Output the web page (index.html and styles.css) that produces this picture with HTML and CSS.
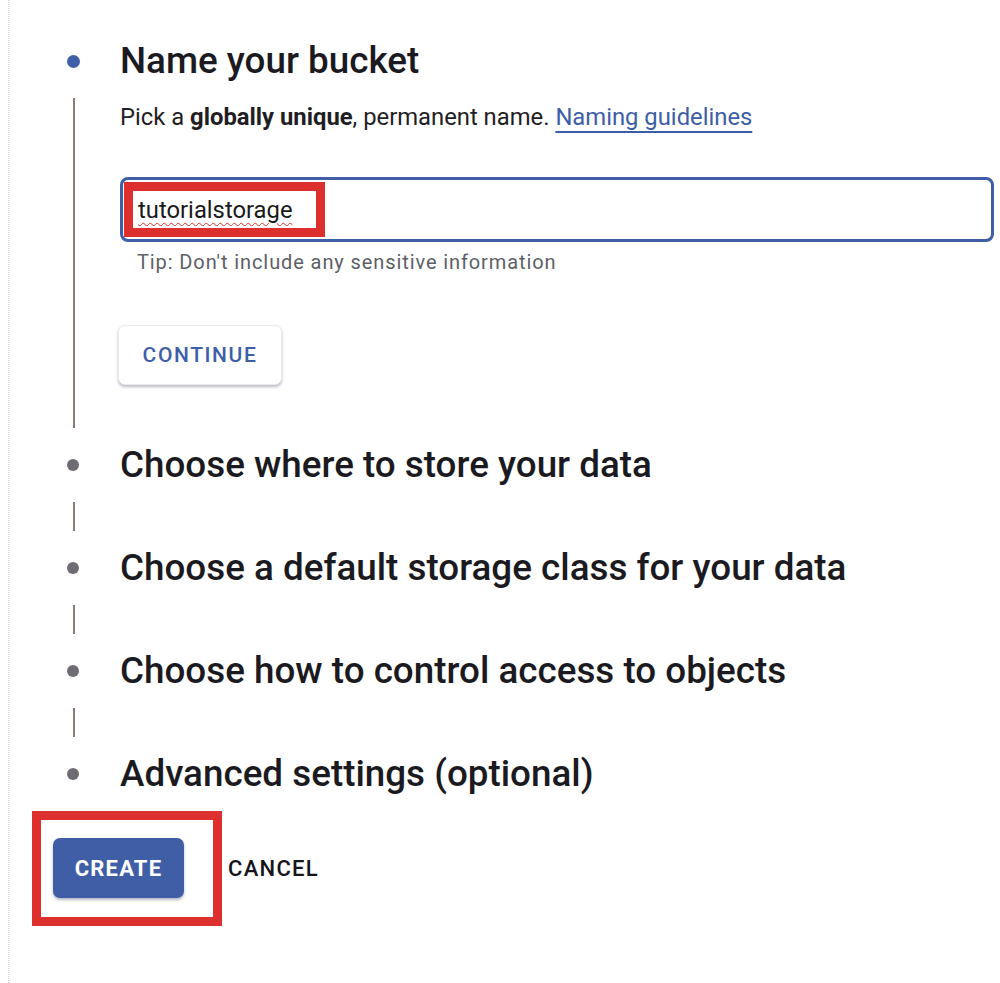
FILE: index.html
```html
<!DOCTYPE html>
<html lang="en">
<head>
<meta charset="utf-8">
<title>Create a bucket</title>
<link rel="stylesheet" href="styles.css">
</head>
<body>
<div class="page">
  <div class="stepper">
    <section class="step">
      <div class="step-head">
        <span class="dot dot-active"></span>
        <h2 class="step-title">Name your bucket</h2>
      </div>
      <div class="step-body">
        <p class="hint">Pick a <b>globally unique</b>, permanent name. <a class="link" href="#">Naming guidelines</a></p>
        <div class="field">
          <span class="mark"><span class="typo">tutorialstorage</span></span>
        </div>
        <p class="tip">Tip: Don't include any sensitive information</p>
        <button class="btn-continue" type="button">CONTINUE</button>
      </div>
    </section>

    <section class="step">
      <div class="step-head">
        <span class="dot"></span>
        <h2 class="step-title">Choose where to store your data</h2>
      </div>
    </section>
    <div class="connector"></div>
    <section class="step">
      <div class="step-head">
        <span class="dot"></span>
        <h2 class="step-title">Choose a default storage class for your data</h2>
      </div>
    </section>
    <div class="connector"></div>
    <section class="step">
      <div class="step-head">
        <span class="dot"></span>
        <h2 class="step-title">Choose how to control access to objects</h2>
      </div>
    </section>
    <div class="connector"></div>
    <section class="step">
      <div class="step-head">
        <span class="dot"></span>
        <h2 class="step-title">Advanced settings (optional)</h2>
      </div>
    </section>
  </div>

  <div class="actions">
    <div class="highlight">
      <button class="btn-create" type="button">CREATE</button>
    </div>
    <button class="btn-cancel" type="button">CANCEL</button>
  </div>
</div>
</body>
</html>
```

FILE: styles.css
```css
* { box-sizing: border-box; }

html, body {
  margin: 0;
  padding: 0;
  background: #ffffff;
}

body {
  font-family: Roboto, "Liberation Sans", Arial, sans-serif;
  color: #1d1c22;
}

.page {
  margin-left: 8px;
  border-left: 1px dotted #ddd3cb;
  min-height: 983px;
  padding-top: 24px;
}

.step-head {
  display: flex;
  align-items: center;
  height: 74px;
}

.dot {
  width: 12px;
  height: 12px;
  border-radius: 50%;
  background: #6f6b73;
  margin-left: 58px;
  margin-right: 41px;
  flex: none;
}

.dot-active {
  background: #3f5fa8;
  width: 13px;
  height: 13px;
  margin-right: 40px;
}

.step-title {
  margin: 0;
  font-size: 36.8px;
  font-weight: 500;
  line-height: 44px;
  color: #1b1a21;
  white-space: nowrap;
}

.step-body {
  margin-left: 64px;
  border-left: 2px solid #8b7b74;
  padding: 5px 6px 43px 45px;
}

.connector {
  margin-left: 64px;
  width: 2px;
  height: 29px;
  background: #8b7b74;
}

.hint {
  margin: 0;
  font-size: 23.8px;
  line-height: 28px;
  color: #1f1e24;
  white-space: nowrap;
}

.hint b { font-weight: 700; }

.link {
  color: #3d5ea7;
  text-decoration: underline;
  text-decoration-thickness: 2px;
  text-underline-offset: 6px;
}

.field {
  margin-top: 46px;
  height: 65px;
  border: 3px solid #3e5ea7;
  border-radius: 8px;
  display: flex;
  align-items: center;
  padding-left: 1px;
}

.mark {
  display: inline-flex;
  align-items: center;
  height: 55px;
  border: 9px solid #de2f2f;
  padding: 0 23px 0 5px;
}

.typo {
  font-size: 23.8px;
  line-height: 30px;
  color: #1a1a1a;
  text-decoration: underline wavy #e0302f;
  text-decoration-thickness: 1px;
  text-underline-offset: 4px;
}

.tip {
  margin: 8px 0 0 17px;
  font-size: 20px;
  line-height: 24px;
  letter-spacing: 0.9px;
  color: #5c5f66;
  white-space: nowrap;
}

.btn-continue {
  margin-top: 51px;
  margin-left: -2px;
  width: 164px;
  height: 60px;
  border: 1px solid #ececf0;
  border-radius: 7px;
  background: #ffffff;
  box-shadow: 0 2px 3px rgba(60, 64, 90, 0.35);
  font-family: inherit;
  font-size: 21px;
  font-weight: 500;
  letter-spacing: 1.6px;
  color: #3e5ea7;
  cursor: pointer;
}

.actions {
  display: flex;
  align-items: center;
  margin-left: 23px;
}

.highlight {
  border: 9px solid #de2f2f;
  padding: 18px 29px 19px 12px;
}

.btn-create {
  display: block;
  width: 131px;
  height: 60px;
  padding: 0;
  border: none;
  border-radius: 7px;
  background: #3f5ea6;
  box-shadow: 0 2px 3px rgba(40, 50, 90, 0.35);
  font-family: inherit;
  font-size: 22px;
  font-weight: 700;
  letter-spacing: 1.2px;
  color: #ffffff;
  cursor: pointer;
}

.btn-cancel {
  margin-left: 6px;
  padding: 0;
  border: none;
  background: none;
  font-family: inherit;
  font-size: 22px;
  font-weight: 500;
  letter-spacing: 1.3px;
  color: #15141a;
  cursor: pointer;
}
```
